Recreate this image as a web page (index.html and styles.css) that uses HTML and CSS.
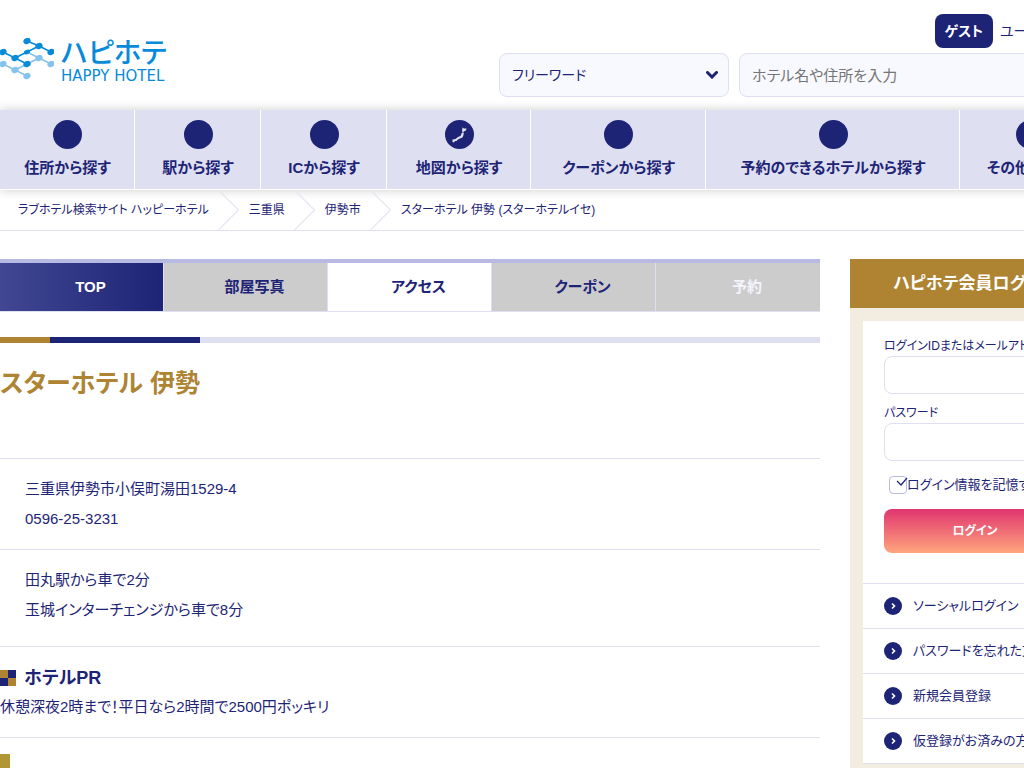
FILE: index.html
```html
<!DOCTYPE html>
<html lang="ja">
<head>
    <meta charset="UTF-8">
    <meta name="viewport" content="width=device-width, initial-scale=1.0">
    <title>スターホテル 伊勢</title>
    <link rel="stylesheet" href="styles.css">
</head>
<body>
    <div class="page">
        <header class="header">
            <a href="#" class="logo">
                <svg width="54" height="42" viewBox="0 0 54 42" aria-hidden="true">
                    <g fill="#86c3ec" stroke="#86c3ec" stroke-width="1.5">
                        <path d="M3 26 15 32 27 38M15 32 27 26M27 14 39 20 51 26M27 26 39 20" fill="none"/>
                        <ellipse cx="3" cy="26" rx="3" ry="2.2" transform="rotate(-25 3 26)"/>
                        <ellipse cx="15" cy="32" rx="3" ry="2.2" transform="rotate(-25 15 32)"/>
                        <ellipse cx="27" cy="38" rx="3" ry="2.2" transform="rotate(-25 27 38)"/>
                        <ellipse cx="39" cy="20" rx="3" ry="2.2" transform="rotate(-25 39 20)"/>
                        <ellipse cx="51" cy="26" rx="3" ry="2.2" transform="rotate(-25 51 26)"/>
                    </g>
                    <g fill="#078bd9" stroke="#078bd9" stroke-width="1.5">
                        <path d="M3 14 15 20 27 26M15 20 27 14 39 8M27 3 39 8 51 14" fill="none"/>
                        <ellipse cx="3" cy="14" rx="3" ry="2.2" transform="rotate(-25 3 14)"/>
                        <ellipse cx="15" cy="20" rx="3" ry="2.2" transform="rotate(-25 15 20)"/>
                        <ellipse cx="27" cy="26" rx="3" ry="2.2" transform="rotate(-25 27 26)"/>
                        <ellipse cx="27" cy="14" rx="2.5" ry="1.5" transform="rotate(-25 27 14)"/>
                        <ellipse cx="39" cy="8" rx="3" ry="2.2" transform="rotate(-25 39 8)"/>
                        <ellipse cx="27" cy="3" rx="3" ry="2.2" transform="rotate(-25 27 3)"/>
                        <ellipse cx="51" cy="14" rx="3" ry="2.2" transform="rotate(-25 51 14)"/>
                    </g>
                </svg>
                <span class="logo-text">
                    <span class="logo-ja">ハピホテ</span>
                    <span class="logo-en">HAPPY HOTEL</span>
                </span>
            </a>
            <div class="header-right">
                <div class="user">
                    <span class="user-badge">ゲスト</span>
                    <span class="user-name">ユーザー様</span>
                </div>
                <form class="search">
                    <div class="select-wrap">
                        <select class="field" aria-label="検索条件">
                            <option>フリーワード</option>
                        </select>
                        <svg class="select-arrow" width="12" height="8" viewBox="0 0 12 8" aria-hidden="true"><path d="M1.5 1.5 6 6 10.5 1.5" fill="none" stroke="#1d2476" stroke-width="3" stroke-linecap="round"/></svg>
                    </div>
                    <input type="text" class="field keyword" placeholder="ホテル名や住所を入力" aria-label="キーワード">
                </form>
            </div>
        </header>

        <!-- Global navigation -->
        <nav class="nav">
            <a href="#"><span class="nav-icon"></span>住所から探す</a>
            <a href="#"><span class="nav-icon"></span>駅から探す</a>
            <a href="#"><span class="nav-icon"></span>ICから探す</a>
            <a href="#">
                <span class="nav-icon">
                    <svg width="15" height="16" viewBox="0 0 15 16" aria-hidden="true"><path d="M10.5 .5 12 1.500 14.500 1.500 14 3.500 12.500 4 11.500 5 10 4.500ZM10 5.500 11.800 5.500 11.500 8 10.500 10.500 8 11.500 6 12.500 4.500 14 3 14 2 15.500 .5 15 .5 12.500 3.500 12 6 10 8.500 9Z" fill="#dfe0ef"/></svg>
                </span>地図から探す
            </a>
            <a href="#"><span class="nav-icon"></span>クーポンから探す</a>
            <a href="#"><span class="nav-icon"></span>予約のできるホテルから探す</a>
            <a href="#"><span class="nav-icon"></span>その他の探す</a>
        </nav>

        <nav class="breadcrumb">
            <a href="#">ラブホテル検索サイト ハッピーホテル</a>
            <svg width="22" height="40" viewBox="0 0 22 40" aria-hidden="true"><path d="M.5 0 20.500 20 .5 40" fill="none" stroke="#e6e6f4" stroke-width="1.2"/></svg>
            <a href="#">三重県</a>
            <svg width="22" height="40" viewBox="0 0 22 40" aria-hidden="true"><path d="M.5 0 20.500 20 .5 40" fill="none" stroke="#e6e6f4" stroke-width="1.2"/></svg>
            <a href="#">伊勢市</a>
            <svg width="22" height="40" viewBox="0 0 22 40" aria-hidden="true"><path d="M.5 0 20.500 20 .5 40" fill="none" stroke="#e6e6f4" stroke-width="1.2"/></svg>
            <span>スターホテル 伊勢 (スターホテルイセ)</span>
        </nav>

        <div class="columns">
            <main class="main">
                <nav class="tabs">
                    <a href="#" class="active">TOP</a>
                    <a href="#">部屋写真</a>
                    <a href="#" class="open">アクセス</a>
                    <a href="#">クーポン</a>
                    <a href="#" class="disabled">予約</a>
                </nav>
                <div class="title-bar"></div>
                <h1>スターホテル 伊勢</h1>
                <section class="info">
                    <p>三重県伊勢市小俣町湯田1529-4</p>
                    <p>0596-25-3231</p>
                </section>
                <section class="info access">
                    <p>田丸駅から車で2分</p>
                    <p>玉城インターチェンジから車で8分</p>
                </section>
                <section class="pr">
                    <h2><span class="check-mark"></span>ホテルPR</h2>
                    <p>休憩深夜2時まで！平日なら2時間で2500円ポッキリ</p>
                </section>
                <section class="next">
                    <div class="next-mark"></div>
                </section>
            </main>

            <!-- Member login -->
            <aside class="side">
                <h2>ハピホテ会員ログイン</h2>
                <div class="panel">
                    <form class="login">
                        <label for="login-id">ログインIDまたはメールアドレス</label>
                        <input type="text" id="login-id">
                        <label for="login-pw">パスワード</label>
                        <input type="password" id="login-pw">
                        <div class="remember">
                            <span class="box">
                                <input type="checkbox" id="remember" checked>
                                <svg width="12" height="9" viewBox="0 0 12 9" aria-hidden="true"><path d="M1 4 5 8 11 1" fill="none" stroke="#1d2476" stroke-width="1.2"/></svg>
                            </span>
                            <label for="remember">ログイン情報を記憶する</label>
                        </div>
                        <button type="button">ログイン</button>
                    </form>
                    <ul class="links">
                        <li><a href="#"><svg width="18" height="18" viewBox="0 0 18 18" aria-hidden="true"><circle cx="9" cy="9" r="9" fill="#1d2476"/><path d="M8 6.500 10.500 9 8 11.500" fill="none" stroke="#fff" stroke-width="1.6"/></svg>ソーシャルログイン</a></li>
                        <li><a href="#"><svg width="18" height="18" viewBox="0 0 18 18" aria-hidden="true"><circle cx="9" cy="9" r="9" fill="#1d2476"/><path d="M8 6.500 10.500 9 8 11.500" fill="none" stroke="#fff" stroke-width="1.6"/></svg>パスワードを忘れた方</a></li>
                        <li><a href="#"><svg width="18" height="18" viewBox="0 0 18 18" aria-hidden="true"><circle cx="9" cy="9" r="9" fill="#1d2476"/><path d="M8 6.500 10.500 9 8 11.500" fill="none" stroke="#fff" stroke-width="1.6"/></svg>新規会員登録</a></li>
                        <li><a href="#"><svg width="18" height="18" viewBox="0 0 18 18" aria-hidden="true"><circle cx="9" cy="9" r="9" fill="#1d2476"/><path d="M8 6.500 10.500 9 8 11.500" fill="none" stroke="#fff" stroke-width="1.6"/></svg>仮登録がお済みの方</a></li>
                    </ul>
                </div>
            </aside>
        </div>
    </div>
</body>
</html>
```
FILE: styles.css
```css
* {
    box-sizing: border-box;
}
html {
    overflow: hidden;
}
body {
    margin: 0;
    background-color: #fff;
    color: #1d2476;
    font-family: "Liberation Sans", "Noto Sans CJK JP", sans-serif;
    font-feature-settings: "palt";
    font-size: 15px;
    line-height: 30px;
}
a {
    color: inherit;
    text-decoration: none;
}
h1, h2, p, ul {
    margin: 0;
    padding: 0;
}
input, select, button {
    font: inherit;
    font-feature-settings: inherit;
    color: inherit;
}
.page {
    min-width: 1100px;
}

/* Header */
.header {
    display: flex;
    justify-content: space-between;
    height: 110px;
    padding-top: 14px;
}
.logo {
    display: flex;
    gap: 7px;
    padding-top: 24px;
    color: #078bd9;
}
.logo-text {
    display: flex;
    flex-direction: column;
}
.logo-ja {
    font-size: 28px;
    font-weight: 500;
    line-height: 31px;
}
.logo-en {
    font-family: "DejaVu Sans", sans-serif;
    font-size: 15px;
    line-height: 14px;
}
.header-right {
    width: 601px;
}
.user {
    display: flex;
    justify-content: flex-end;
    gap: 7px;
    margin-bottom: 5px;
    font-size: 14px;
    line-height: 34px;
}
.user-badge {
    padding: 0 10px;
    border-radius: 8px;
    background-color: #1d2476;
    color: #fff;
    font-weight: bold;
}
.user-name {
    width: 100px;
}
.search {
    display: flex;
    gap: 10px;
}
.select-wrap {
    position: relative;
    width: 230px;
}
.field {
    width: 100%;
    height: 44px;
    padding: 0 12px;
    border: 1px solid #dedff0;
    border-radius: 8px;
    background-color: #f8f9fe;
    appearance: none;
}
.field::placeholder {
    color: #757575;
}
select.field {
    font-size: 14px;
}
.keyword {
    flex: 1;
}
.select-arrow {
    position: absolute;
    top: 18px;
    right: 11px;
    pointer-events: none;
}

/* Navigation */
.nav {
    display: grid;
    grid-template-columns: 135fr 126fr 126fr 144fr 175fr 254fr 140fr;
    border-bottom: 1px solid #fff;
    box-shadow: 0 0 10px rgba(0, 0, 0, 0.2);
}
.nav a {
    display: flex;
    flex-direction: column;
    align-items: center;
    gap: 4px;
    height: 79px;
    padding: 10px 0 0 1px;
    border-right: 1px solid #fff;
    background-color: #dedff0;
    font-weight: bold;
    white-space: nowrap;
}
.nav-icon {
    display: flex;
    align-items: center;
    justify-content: center;
    width: 29px;
    height: 29px;
    border-radius: 50%;
    background-color: #1d2476;
}
.breadcrumb {
    display: flex;
    align-items: center;
    gap: 9px;
    padding-left: 18px;
    border-bottom: 1px solid #dedff0;
    font-size: 12px;
    line-height: 40px;
}

/* Layout */
.columns {
    display: grid;
    grid-template-columns: 1fr 250px;
    gap: 30px;
    padding-top: 28px;
}
.tabs {
    display: grid;
    grid-template-columns: repeat(5, 1fr);
    border-top: 4px solid #b8bae3;
    border-bottom: 1px solid #dedff0;
    font-weight: bold;
    line-height: 48px;
    text-align: center;
}
.tabs a {
    padding-left: 18px;
    border-right: 1px solid #dedff0;
    background-color: #ccc;
}
.tabs .active {
    background: linear-gradient(to right, #414792, #1d2476);
    color: #fff;
}
.tabs .open {
    background-color: #fff;
}
.tabs .disabled {
    border-right: none;
    color: #f3f4fc;
}
.title-bar {
    height: 6px;
    margin-top: 25px;
    background: linear-gradient(to right, #ae8432 50px, #1d2476 50px, #1d2476 200px, #dedff0 200px);
}
h1 {
    padding: 21px 0 55px;
    color: #ae8432;
    font-size: 25px;
    line-height: 39px;
}
.info {
    padding: 15px 25px;
    border-top: 1px solid #dedff0;
}
.access {
    padding-bottom: 21px;
}
.pr {
    padding: 17px 0 15px;
    border-top: 1px solid #dedff0;
    border-bottom: 1px solid #dedff0;
}
.pr h2 {
    display: flex;
    align-items: center;
    gap: 8px;
    font-size: 18px;
    line-height: 28px;
}
.check-mark {
    width: 16px;
    height: 16px;
    background: conic-gradient(#1d2476 25%, #ae8432 25% 50%, #1d2476 50% 75%, #ae8432 75%);
}
.next {
    padding-top: 16px;
}
.next-mark {
    width: 10px;
    height: 30px;
    background-color: #b09732;
}

/* Sidebar */
.side {
    background-color: #f3ece0;
}
.side h2 {
    background-color: #ae8432;
    color: #fff;
    font-size: 17px;
    line-height: 49px;
    text-align: center;
}
.panel {
    margin: 13px;
    background-color: #fff;
}
.login {
    padding: 15px 21px 30px;
    font-size: 12px;
    white-space: nowrap;
}
.login > label {
    display: block;
    line-height: 20px;
}
.login > input {
    display: block;
    width: 100%;
    height: 38px;
    margin-bottom: 9px;
    padding: 0 10px;
    border: 1px solid #dedff0;
    border-radius: 8px;
    background-color: #fff;
}
.remember {
    display: flex;
    align-items: center;
    padding-left: 5px;
    margin: 15px 0;
    font-size: 13px;
    line-height: 18px;
}
.box {
    position: relative;
    width: 18px;
    height: 18px;
}
.box input {
    display: block;
    width: 18px;
    height: 18px;
    margin: 0;
    border: 1px solid #b8bae3;
    border-radius: 4px;
    appearance: none;
}
.box svg {
    position: absolute;
    top: 1px;
    left: 7px;
    pointer-events: none;
}
.login button {
    width: 100%;
    height: 44px;
    border: none;
    border-radius: 8px;
    background: linear-gradient(#e0356f, #ffa57d);
    color: #fff;
    font-size: 12px;
    font-weight: bold;
    cursor: pointer;
}
.links {
    border-bottom: 1px solid #dedff0;
    font-size: 13px;
    list-style: none;
}
.links a {
    display: flex;
    align-items: center;
    gap: 11px;
    padding-left: 21px;
    border-top: 1px solid #dedff0;
    line-height: 44px;
}
```
